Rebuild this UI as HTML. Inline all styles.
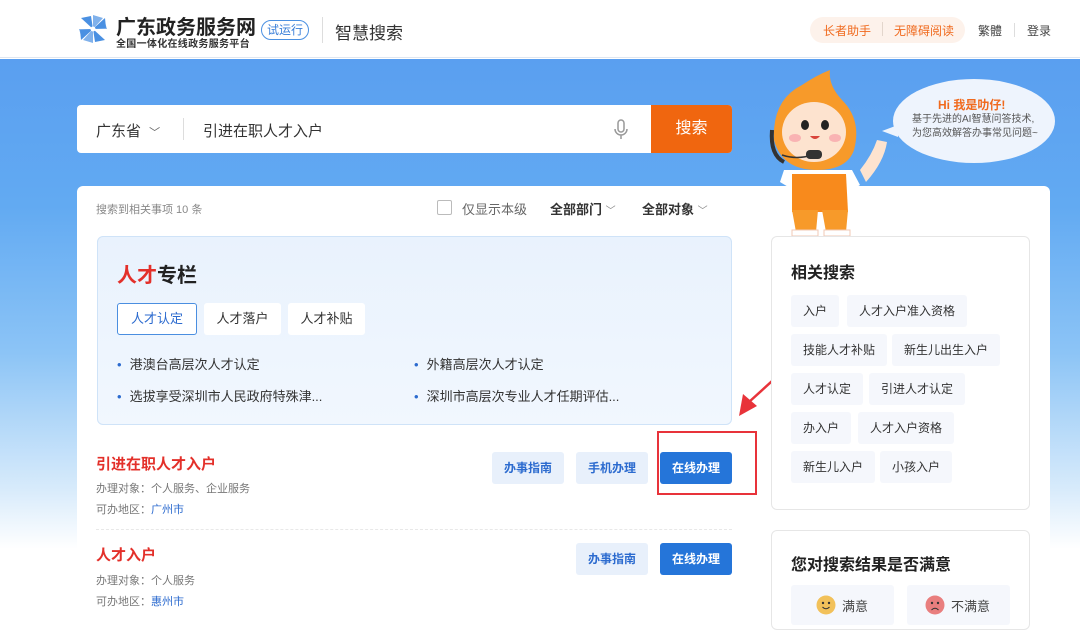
<!DOCTYPE html>
<html><head><meta charset="utf-8"><style>
*{margin:0;padding:0;box-sizing:border-box}
body{width:1080px;height:622px;overflow:hidden;position:relative;font-family:"Liberation Sans","Noto Sans CJK SC",sans-serif;background:#fff;color:#333}
.a{position:absolute;white-space:nowrap}
.hdr{left:0;top:0;width:1080px;height:58px;background:#fff;border-bottom:1px solid #dfe6f0}
.bg{left:0;top:59px;width:1080px;height:490px;background:linear-gradient(180deg,#5a9ff0 0%,#62aaf2 30%,#8cc4f6 60%,#d8ebfb 88%,#fff 100%)}
.tag{background:#f5f7fc;border-radius:3px;font-size:12px;color:#333;height:32px;line-height:32px;padding:0 12px}
.btn{height:32px;line-height:32px;border-radius:3px;font-size:12px;font-weight:bold;text-align:center;width:72px}
.lb{background:#e8f0fb;color:#2c6bcf}
.db{background:#2575d9;color:#fff}
</style></head><body>
<div class="a hdr"></div>
<svg class="a" style="left:78px;top:14px" width="30" height="30" viewBox="0 0 30 30"><g fill="#4a90e2"><path d="M15 15 L3 4 L13 2Z"/><path d="M15 15 L27 4 L28 14Z"/><path d="M15 15 L27 26 L17 28Z"/><path d="M15 15 L3 26 L2 16Z"/><path d="M15 15 L15 1 L25 4Z" opacity=".7"/><path d="M15 15 L1 15 L4 25Z" opacity=".7"/><path d="M15 15 L29 15 L26 5Z" opacity=".7"/><path d="M15 15 L15 29 L5 26Z" opacity=".7"/></g><circle cx="15" cy="15" r="2.5" fill="#fff"/></svg>
<div class="a" style="left:116px;top:11px;font-size:20px;font-weight:bold;color:#222">广东政务服务网</div>
<div class="a" style="left:116px;top:35px;font-size:10px;font-weight:bold;color:#333;letter-spacing:0.3px">全国一体化在线政务服务平台</div>
<div class="a" style="left:261px;top:20px;width:48px;height:20px;border:1px solid #4a90e2;border-radius:10px;font-size:12px;color:#3a7fd8;text-align:center;line-height:18px">试运行</div>
<div class="a" style="left:322px;top:17px;width:1px;height:26px;background:#ddd"></div>
<div class="a" style="left:335px;top:19px;font-size:17px;color:#333">智慧搜索</div>
<div class="a" style="left:810px;top:17px;width:155px;height:26px;background:#fdf2eb;border-radius:13px"></div>
<div class="a" style="left:823px;top:22px;font-size:12px;color:#f06a1e">长者助手</div>
<div class="a" style="left:882px;top:22px;width:1px;height:14px;background:#e3d6cc"></div>
<div class="a" style="left:894px;top:22px;font-size:12px;color:#f06a1e">无障碍阅读</div>
<div class="a" style="left:978px;top:22px;font-size:12px;color:#444">繁體</div>
<div class="a" style="left:1014px;top:23px;width:1px;height:14px;background:#ddd"></div>
<div class="a" style="left:1027px;top:22px;font-size:12px;color:#444">登录</div>

<div class="a bg"></div>
<!-- search -->
<div class="a" style="left:77px;top:105px;width:655px;height:48px;background:#fff;border-radius:4px"></div>
<div class="a" style="left:96px;top:120px;font-size:15px;color:#333">广东省 <span style="font-size:11px;color:#666;margin-left:4px">﹀</span></div>
<div class="a" style="left:183px;top:118px;width:1px;height:22px;background:#ddd"></div>
<div class="a" style="left:203px;top:120px;font-size:15px;color:#333">引进在职人才入户</div>
<svg class="a" style="left:612px;top:119px" width="18" height="22" viewBox="0 0 18 22" fill="none" stroke="#999" stroke-width="1.5"><rect x="6" y="1" width="6" height="12" rx="3"/><path d="M3 10a6 6 0 0 0 12 0M9 16v4"/></svg>
<div class="a" style="left:651px;top:105px;width:81px;height:48px;background:#f0660f;border-radius:0 4px 4px 0;color:#fff;font-size:16px;text-align:center;line-height:48px">搜索</div>

<!-- bubble -->
<div class="a" style="left:893px;top:79px;width:162px;height:84px;background:#eef4fd;border-radius:50%"></div>
<div class="a" style="left:882px;top:125px;width:0;height:0;border-top:6px solid transparent;border-bottom:6px solid transparent;border-right:16px solid #eef4fd"></div>
<div class="a" style="left:938px;top:96px;font-size:12px;color:#f06a1e;font-weight:bold">Hi 我是叻仔!</div>
<div class="a" style="left:912px;top:113px;font-size:10px;color:#555;line-height:14px">基于先进的AI智慧问答技术,<br>为您高效解答办事常见问题~</div>

<!-- main card -->
<div class="a" style="left:77px;top:186px;width:973px;height:440px;background:#fff;border-radius:6px"></div>

<!-- mascot (over card) -->
<svg class="a" style="left:762px;top:70px" width="130" height="168" viewBox="0 0 130 168">
<path d="M12 70 Q10 30 40 15 Q55 5 68 0 Q66 15 80 30 Q100 50 92 80 Q85 100 55 100 Q20 100 12 70Z" fill="#f79a2a"/>
<path d="M10 60 Q8 85 22 92" stroke="#333" stroke-width="4" fill="none"/>
<ellipse cx="52" cy="62" rx="32" ry="30" fill="#fde3cf"/>
<ellipse cx="43" cy="55" rx="4" ry="5" fill="#222"/><ellipse cx="63" cy="55" rx="4" ry="5" fill="#222"/>
<ellipse cx="33" cy="68" rx="6" ry="4" fill="#f9b3b3"/><ellipse cx="73" cy="68" rx="6" ry="4" fill="#f9b3b3"/>
<path d="M48 66 Q53 72 58 66Z" fill="#d9443a"/>
<path d="M20 85 Q35 90 50 85" stroke="#333" stroke-width="1.5" fill="none"/>
<rect x="44" y="80" width="16" height="9" rx="4" fill="#333"/>
<path d="M98 100 Q110 85 115 70 L125 72 Q122 92 104 112Z" fill="#fde3cf"/>
<path d="M22 100 L90 100 L98 115 L90 120 L86 140 L30 140 L28 118 L18 112Z" fill="#fff"/>
<path d="M30 104 L84 104 L86 142 L30 142Z" fill="#f88a1c"/>
<path d="M30 140 L56 140 L54 162 L34 162Z M60 140 L86 140 L84 162 L64 162Z" fill="#f79a2a"/>
<path d="M30 160 L56 160 L56 166 L30 166Z M62 160 L88 160 L88 166 L62 166Z" fill="#fff" stroke="#f0c9b5"/>
</svg>

<div class="a" style="left:96px;top:201px;font-size:11px;color:#888">搜索到相关事项 10 条</div>
<div class="a" style="left:437px;top:200px;width:15px;height:15px;border:1px solid #bbb;border-radius:2px"></div>
<div class="a" style="left:462px;top:199px;font-size:13px;color:#666">仅显示本级</div>
<div class="a" style="left:550px;top:199px;font-size:13px;color:#333;font-weight:bold">全部部门 <span style="font-size:10px;color:#888;font-weight:normal">﹀</span></div>
<div class="a" style="left:642px;top:199px;font-size:13px;color:#333;font-weight:bold">全部对象 <span style="font-size:10px;color:#888;font-weight:normal">﹀</span></div>

<div class="a" style="left:97px;top:236px;width:635px;height:189px;background:linear-gradient(180deg,#e9f2fd,#f1f7fe);border:1px solid #cfe3f8;border-radius:6px"></div>
<div class="a" style="left:117px;top:259px;font-size:20px;font-weight:bold;color:#222"><span style="color:#e3302a">人才</span>专栏</div>
<div class="a" style="left:117px;top:303px;width:80px;height:32px;background:#fff;border:1px solid #4a8ee0;border-radius:3px;font-size:13px;color:#2c6bcf;text-align:center;line-height:30px">人才认定</div>
<div class="a" style="left:204px;top:303px;width:77px;height:32px;background:#fff;border-radius:3px;font-size:13px;color:#333;text-align:center;line-height:32px">人才落户</div>
<div class="a" style="left:288px;top:303px;width:77px;height:32px;background:#fff;border-radius:3px;font-size:13px;color:#333;text-align:center;line-height:32px">人才补贴</div>
<div class="a" style="left:117px;top:354px;font-size:13px;color:#333"><span style="color:#2c6bcf;margin-right:8px">•</span>港澳台高层次人才认定</div>
<div class="a" style="left:117px;top:386px;font-size:13px;color:#333"><span style="color:#2c6bcf;margin-right:8px">•</span>选拔享受深圳市人民政府特殊津...</div>
<div class="a" style="left:414px;top:354px;font-size:13px;color:#333"><span style="color:#2c6bcf;margin-right:8px">•</span>外籍高层次人才认定</div>
<div class="a" style="left:414px;top:386px;font-size:13px;color:#333"><span style="color:#2c6bcf;margin-right:8px">•</span>深圳市高层次专业人才任期评估...</div>

<div class="a" style="left:96px;top:453px;font-size:15px;font-weight:bold;color:#e3302a">引进在职人才入户</div>
<div class="a" style="left:96px;top:480px;font-size:11px;color:#777">办理对象：个人服务、企业服务</div>
<div class="a" style="left:96px;top:501px;font-size:11px;color:#777">可办地区：<span style="color:#2c6bcf">广州市</span></div>
<div class="a btn lb" style="left:492px;top:452px">办事指南</div>
<div class="a btn lb" style="left:576px;top:452px">手机办理</div>
<div class="a btn db" style="left:660px;top:452px">在线办理</div>
<div class="a" style="left:657px;top:431px;width:100px;height:64px;border:2px solid #e8333a"></div>
<div class="a" style="left:96px;top:529px;width:636px;border-top:1px dashed #e8e8e8"></div>
<div class="a" style="left:96px;top:544px;font-size:15px;font-weight:bold;color:#e3302a">人才入户</div>
<div class="a" style="left:96px;top:572px;font-size:11px;color:#777">办理对象：个人服务</div>
<div class="a" style="left:96px;top:593px;font-size:11px;color:#777">可办地区：<span style="color:#2c6bcf">惠州市</span></div>
<div class="a btn lb" style="left:576px;top:543px">办事指南</div>
<div class="a btn db" style="left:660px;top:543px">在线办理</div>

<!-- arrow -->
<svg class="a" style="left:735px;top:360px" width="60" height="60" viewBox="0 0 60 60"><path d="M58 2 L14 42" stroke="#e8333a" stroke-width="2.5"/><path d="M4 56 L8 34 L22 46Z" fill="#e8333a"/></svg>
<div class="a" style="left:785px;top:482px;width:0;height:0;border-left:4px solid transparent;border-right:4px solid transparent;border-bottom:7px solid #e8333a"></div>

<!-- right cards -->
<div class="a" style="left:771px;top:236px;width:259px;height:274px;border:1px solid #e6e6e6;border-radius:6px;background:#fff"></div>
<div class="a" style="left:791px;top:259px;font-size:16px;font-weight:bold;color:#222">相关搜索</div>
<div class="a tag" style="left:791px;top:295px">入户</div>
<div class="a tag" style="left:847px;top:295px">人才入户准入资格</div>
<div class="a tag" style="left:791px;top:334px">技能人才补贴</div>
<div class="a tag" style="left:892px;top:334px">新生儿出生入户</div>
<div class="a tag" style="left:791px;top:373px">人才认定</div>
<div class="a tag" style="left:869px;top:373px">引进人才认定</div>
<div class="a tag" style="left:791px;top:412px">办入户</div>
<div class="a tag" style="left:858px;top:412px">人才入户资格</div>
<div class="a tag" style="left:791px;top:451px">新生儿入户</div>
<div class="a tag" style="left:880px;top:451px">小孩入户</div>

<div class="a" style="left:771px;top:530px;width:259px;height:100px;border:1px solid #e6e6e6;border-radius:6px;background:#fff"></div>
<div class="a" style="left:791px;top:551px;font-size:16px;font-weight:bold;color:#222">您对搜索结果是否满意</div>
<div class="a" style="left:791px;top:585px;width:103px;height:40px;background:#f5f7fc;border-radius:3px"></div>
<div class="a" style="left:907px;top:585px;width:103px;height:40px;background:#f5f7fc;border-radius:3px"></div>
<svg class="a" style="left:816px;top:595px" width="20" height="20"><circle cx="10" cy="10" r="9.5" fill="#f2c15a"/><circle cx="7" cy="8" r="1.2" fill="#333"/><circle cx="13" cy="8" r="1.2" fill="#333"/><path d="M6.5 12 Q10 15.5 13.5 12" stroke="#333" fill="none"/></svg>
<div class="a" style="left:842px;top:596px;font-size:13px;color:#444">满意</div>
<svg class="a" style="left:925px;top:595px" width="20" height="20"><circle cx="10" cy="10" r="9.5" fill="#e97e7e"/><circle cx="7" cy="8" r="1.2" fill="#333"/><circle cx="13" cy="8" r="1.2" fill="#333"/><path d="M6.5 15 Q10 11.5 13.5 15" stroke="#333" fill="none"/></svg>
<div class="a" style="left:951px;top:596px;font-size:13px;color:#444">不满意</div>
</body></html>
